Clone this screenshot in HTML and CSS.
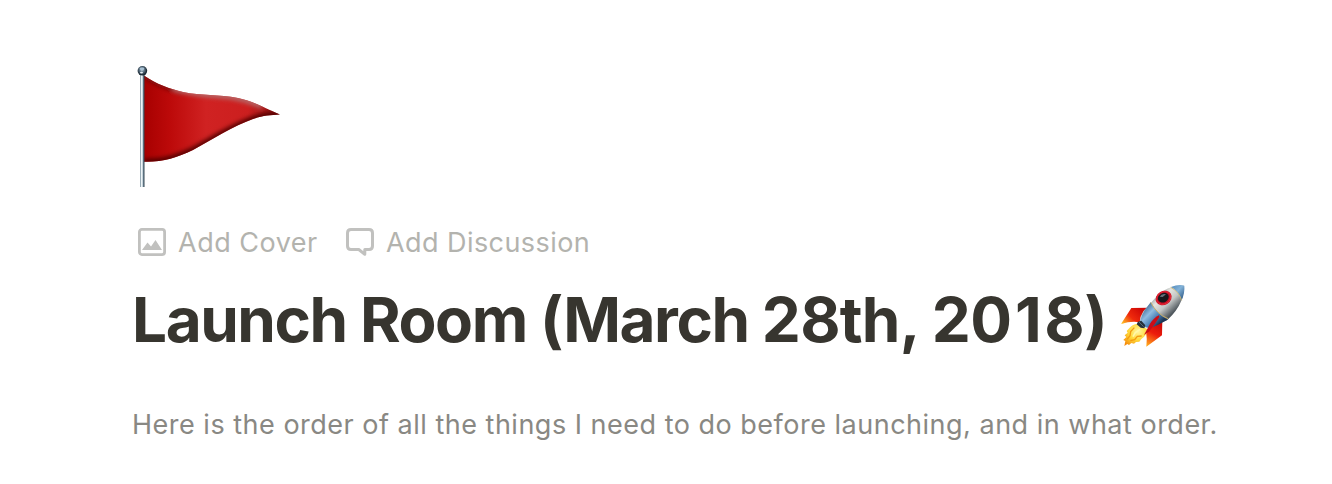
FILE: index.html
```html
<!DOCTYPE html>
<html lang="en">
<head>
<meta charset="utf-8">
<title>Launch Room</title>
<link rel="stylesheet" href="styles.css">
</head>
<body>
<main class="page">
  <svg class="flag" viewBox="0 0 170 140" role="img" aria-label="Red flag">
    <defs>
      <linearGradient id="cloth"><stop offset="0" stop-color="#a60000"/><stop offset=".2" stop-color="#bd0a0a"/><stop offset=".45" stop-color="#d02222"/><stop offset=".75" stop-color="#cc1f1f"/><stop offset="1" stop-color="#7c0c0c"/></linearGradient>
      <linearGradient id="pole"><stop offset="0" stop-color="#6f8795"/><stop offset=".35" stop-color="#f4fafc"/><stop offset=".55" stop-color="#c8d6de"/><stop offset=".8" stop-color="#4d6372"/><stop offset="1" stop-color="#344653"/></linearGradient>
      <radialGradient id="ball" cx=".45" cy=".4"><stop offset="0" stop-color="#c3d6e2"/><stop offset=".4" stop-color="#6d8496"/><stop offset="1" stop-color="#1d2b36"/></radialGradient>
      <clipPath id="flagClip"><path d="M19 20.500C31 29 45 34 58 37C76 41 94 39 113 43C128 46.500 136 51 155 59.500C145 60 138 60.500 128 64C108 71 88 84 68 95C51 103 39 107 19 106.700Z"/></clipPath>
      <filter id="soft" x="-10%" y="-10%" width="120%" height="120%"><feGaussianBlur stdDeviation="2"/></filter>
    </defs>
    <g clip-path="url(#flagClip)">
      <path fill="url(#cloth)" d="M18 15h140v95H18z"/>
      <g fill="none" filter="url(#soft)">
        <path stroke="#7b0808" stroke-width="5" d="M19 20.500C31 29 45 34 58 37"/>
        <path stroke="#b56767" stroke-width="6" d="M48 33C76 41 94 39 113 43C125 45 130 48 137 51"/>
        <path stroke="#540000" stroke-width="6" d="M155 59.500C145 60 138 60.500 128 64C108 71 88 84 68 95C51 103 39 107 19 106.700"/>
      </g>
    </g>
    <path fill="url(#pole)" d="M15 19h4.500v113H15z"/>
    <circle cx="17.400" cy="15.800" r="4.800" fill="url(#ball)"/>
    <ellipse cx="17" cy="13.800" rx="2.400" ry="1.300" fill="#a9c2d4"/>
    <ellipse cx="16.500" cy="17.600" rx="1.500" ry=".9" fill="#e6eff5"/>
  </svg>

  <div class="actions">
    <span class="action">
      <svg class="icon" viewBox="0 0 28 28"><rect x="1.400" y="1.400" width="25.200" height="25.200" rx="2.500" fill="none" stroke="currentColor" stroke-width="2.800"/><path fill="currentColor" d="M4 22 9.500 14.500 13 18.500 17.500 12 24 22Z"/></svg>
      <span class="label cover">Add Cover</span>
    </span>
    <span class="action">
      <svg class="icon" viewBox="0 0 28 28"><path fill="none" stroke="currentColor" stroke-width="3" stroke-linejoin="round" d="M5 1.500H23Q26.500 1.500 26.500 5V18Q26.500 21.500 23 21.500H18.800V26.300L12.800 21.500H5Q1.500 21.500 1.500 18V5Q1.500 1.500 5 1.500Z"/></svg>
      <span class="label discussion">Add Discussion</span>
    </span>
  </div>

  <div class="heading">
    <h1 class="title">Launch Room (March <span class="day">28th, </span><span class="year">20<span class="one">1</span>8)</span></h1>
    <svg class="rocket" viewBox="0 0 255 240" role="img" aria-label="Rocket">
      <defs>
        <linearGradient id="hull" gradientUnits="userSpaceOnUse" x1="122" y1="68" x2="176" y2="125"><stop offset="0" stop-color="#8d979b"/><stop offset=".3" stop-color="#e5e5e0"/><stop offset=".62" stop-color="#c3c6c5"/><stop offset="1" stop-color="#50585e"/></linearGradient>
        <linearGradient id="blue" gradientUnits="userSpaceOnUse" x1="98" y1="95" x2="150" y2="145"><stop offset="0" stop-color="#335e89"/><stop offset=".4" stop-color="#90bce1"/><stop offset=".7" stop-color="#4d83b8"/><stop offset="1" stop-color="#1c3858"/></linearGradient>
        <linearGradient id="nose" x1="0" y1="0" x2="1" y2="1"><stop offset="0" stop-color="#4f86b8"/><stop offset=".45" stop-color="#83b3d9"/><stop offset="1" stop-color="#224a77"/></linearGradient>
        <linearGradient id="finLeft" gradientUnits="userSpaceOnUse" x1="88" y1="98" x2="40" y2="147"><stop offset="0" stop-color="#cf0806"/><stop offset=".55" stop-color="#f02a0c"/><stop offset="1" stop-color="#ffbd22"/></linearGradient>
        <linearGradient id="finRight" gradientUnits="userSpaceOnUse" x1="150" y1="140" x2="112" y2="210"><stop offset="0" stop-color="#c60808"/><stop offset=".5" stop-color="#ed1c0c"/><stop offset="1" stop-color="#ffa51c"/></linearGradient>
        <radialGradient id="flame" cx=".6" cy=".35" r=".75"><stop offset="0" stop-color="#fff6a0"/><stop offset=".5" stop-color="#ffda3b"/><stop offset="1" stop-color="#f58b0b"/></radialGradient>
      </defs>
      <path fill="url(#finLeft)" d="M64 99 116 98 91 143 81 141Q60 139 33 147Z"/>
      <path fill="url(#finRight)" d="M157 135 156 181 109 215Q112 191 108 168L120 158Z"/>
      <path fill="url(#flame)" d="M82 146Q68 147 59 158L50 168 53 173 44 181 49 186 40 195 46 198 43 213 52 207 57 210 64 204 72 206 78 201 88 200 94 192Q110 183 113 163Z"/>
      <path fill="none" stroke="#f49a10" stroke-width="4" d="M73 158 62 170 60 182 51 193M95 183 82 184 74 194 61 197"/>
      <path fill="none" stroke="#fff8a9" stroke-width="5" d="M90 163 76 173 69 185"/>
      <path fill="url(#hull)" d="M221 31C190 30 156 45 139 65L100 109Q90 124 89 142L111 157Q127 158 145 147L173 134Q201 108 214 77Q223 55 221 31Z"/>
      <path fill="url(#blue)" d="M122 82Q142 119 173 134L143 150Q122 161 106 157L89 142Q94 119 105 104Z"/>
      <path fill="none" stroke="#c5ad67" stroke-width="3" d="M122 82Q140 117 174 131"/>
      <path fill="url(#nose)" d="M183 36Q207 26 223 32Q225 52 215 76Q208 49 183 36Z"/>
      <path fill="none" stroke="#ccb875" stroke-width="2.500" d="M182 37Q207 50 215 76"/>
      <path fill="#26313b" d="M84 140 94 137 106 151 103 160 92 158 80 148Z"/>
      <path fill="none" stroke="#6e8798" stroke-width="2" d="M87 141 101 155"/>
      <path fill="#cb0c16" d="M147 121Q132 128 121 145L102 180 118 169Q137 145 148 126Z"/>
      <ellipse cx="161" cy="69" rx="25" ry="21" transform="rotate(-30 161 69)" fill="#c70d20"/>
      <ellipse cx="161" cy="69" rx="22" ry="18" transform="rotate(-30 161 69)" fill="none" stroke="#ed3443" stroke-width="2"/>
      <ellipse cx="160" cy="68" rx="17" ry="14" transform="rotate(-30 160 68)" fill="#17171b"/>
      <path fill="#66727c" d="M149 65Q155 55 168 58L158 66Z"/>
    </svg>
  </div>
  <p class="description">Here is the order of all the things I need to do before launching, and in what order.</p>
</main>
</body>
</html>
```
FILE: styles.css
```css
* { box-sizing: border-box; }
body { margin: 0; background: #fff; font-family: Inter, sans-serif; }
.page { height: 484px; padding: 55px 0 0 125px; overflow: hidden; }
.flag { display: block; width: 170px; height: 140px; }
.actions { display: flex; gap: 28px; height: 34px; margin: 30px 0 0 13px; align-items: center; }
.action { display: flex; align-items: center; gap: 12px; color: #c1c1bf; }
.icon { display: block; width: 28px; height: 28px; flex: none; }
.label { padding-top: 2px; font-size: 27px; line-height: 34px; color: #b3b3ae; white-space: nowrap; }
.cover { width: 140px; letter-spacing: .5px; }
.discussion { letter-spacing: .43px; }
.heading { display: flex; height: 80px; margin-top: 16px; padding-left: 7px; }
.title { width: 978px; margin: 0; font-size: 62px; line-height: 90px; font-weight: 700; letter-spacing: -1.430px; color: #37352f; white-space: nowrap; }
.day { letter-spacing: -.750px; }
.year { letter-spacing: -.500px; }
.one { margin: 0 3px 0 3.500px; }
.rocket { width: 85px; height: 80px; flex: none; }
.description { margin: 50px 0 0 7px; font-size: 27px; line-height: 40px; letter-spacing: .5px; color: #898883; white-space: nowrap; }
```
